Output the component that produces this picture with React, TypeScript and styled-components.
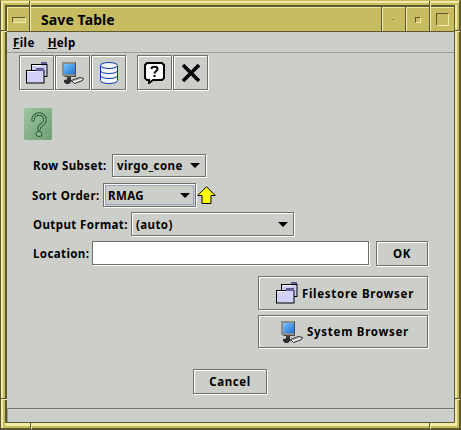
import React from "react";
import styled, { createGlobalStyle } from "styled-components";

const Global = createGlobalStyle`
  html, body { margin: 0; padding: 0; background: #ccceca; }
  body { width: 461px; height: 430px; overflow: hidden; }
`;

const light = "#f0eca8";
const gold = "#c8bc60";
const dark = "#5e5830";
const panel = "#ccceca";
const edge = "#6e706c";

const Frame = styled.div`
  box-sizing: border-box;
  position: relative;
  width: 461px;
  height: 430px;
  background: ${gold};
  border-style: solid;
  border-width: 1px 2px 2px 1px;
  border-color: ${gold} ${dark} ${dark} ${dark};
  padding: 4px 2px 2px 4px;
  box-shadow: inset 2px 2px 0 ${light};
`;
const FrameInner = styled.div`
  box-sizing: border-box;
  height: 100%;
  display: flex;
  border-right: 2px solid ${light};
  border-bottom: 3px solid ${light};
`;
const Body = styled.div`
  flex: 1;
  min-width: 0;
  display: flex;
  flex-direction: column;
  background: ${panel};
  border-style: solid;
  border-width: 2px 1px 1px 2px;
  border-color: ${dark};
`;
const TitleBar = styled.div`
  display: flex;
  height: 24px;
  flex: none;
  background: ${dark};
  gap: 1px;
  border-bottom: 1px solid ${dark};
`;
const TitleCell = styled.div<{ $w?: number; $grow?: boolean }>`
  box-sizing: border-box;
  flex: ${(p) => (p.$grow ? "1" : "none")};
  width: ${(p) => (p.$w ? `${p.$w}px` : "auto")};
  background: ${gold};
  border-left: 1px solid ${light};
  border-top: 1px solid ${light};
  display: flex;
  align-items: center;
  justify-content: center;
`;
const TitleText = styled.div`
  flex: 1;
  padding-left: 10px;
  font: 700 14px "Noto Sans", sans-serif;
  letter-spacing: 0.1px;
  color: #000;
`;
const Dash = styled.div`
  box-sizing: border-box;
  width: 14px;
  height: 6px;
  background: #d8d080;
  border: 1px solid ${dark};
  border-right-color: ${light};
  border-bottom-color: ${light};
`;
const Pip = styled.div<{ $s: number }>`
  box-sizing: border-box;
  width: ${(p) => p.$s}px;
  height: ${(p) => p.$s}px;
  border: 1px solid ${dark};
  border-right-color: ${light};
  border-bottom-color: ${light};
`;
const Notch = styled.div<{ $x: number; $y: number; $w: number; $h: number }>`
  position: absolute;
  left: ${(p) => p.$x}px;
  top: ${(p) => p.$y}px;
  width: ${(p) => p.$w}px;
  height: ${(p) => p.$h}px;
  background: ${dark};
  box-shadow: 1px 1px 0 ${light};
`;
const MenuBar = styled.div`
  display: flex;
  height: 20px;
  flex: none;
  align-items: center;
  gap: 13px;
  padding-left: 6px;
  border-bottom: 1px solid #9a9c98;
`;
const baseText = `
  font-family: "Noto Sans", sans-serif;
  font-size: 11.5px;
  font-weight: 700;
  color: #000;
`;
const MenuItem = styled.span`
  ${baseText}
  letter-spacing: 0.4px;
  u { text-decoration: underline; text-underline-offset: 1px; }
`;
const etched = `
  box-sizing: border-box;
  background: ${panel};
  border: 1px solid ${edge};
  box-shadow: 1px 1px 0 #fff, inset 1px 1px 0 #fff;
`;
const Toolbar = styled.div`
  display: flex;
  flex: none;
  gap: 1px;
  padding: 2px 0 0 12px;
  height: 36px;
`;
const ToolButton = styled.div`
  ${etched}
  width: 35px;
  height: 35px;
  display: flex;
  align-items: center;
  justify-content: center;
`;
const ToolGap = styled.div`
  width: 9px;
`;
const Content = styled.div`
  flex: 1;
  min-height: 0;
  display: flex;
  flex-direction: column;
`;
const HelpBadge = styled.div`
  width: 28px;
  height: 32px;
  margin: 17px 0 14px 17px;
  flex: none;
`;
const Row = styled.div<{ $left: number; $h: number; $mb: number }>`
  display: flex;
  align-items: center;
  height: ${(p) => p.$h}px;
  margin: 0 0 ${(p) => p.$mb}px ${(p) => p.$left}px;
  flex: none;
`;
const Label = styled.span<{ $w: number }>`
  ${baseText}
  letter-spacing: 0.4px;
  white-space: nowrap;
  width: ${(p) => p.$w}px;
  flex: none;
`;
const Combo = styled.div<{ $w: number; $focus?: boolean }>`
  ${etched}
  ${baseText}
  width: ${(p) => p.$w}px;
  height: 100%;
  display: flex;
  align-items: center;
  justify-content: space-between;
  padding: 0 5px 0 4px;
  letter-spacing: 0.4px;
  ${(p) => (p.$focus ? "outline: 1px solid #9aa0c8; outline-offset: -3px;" : "")}
`;
const Caret = styled.span`
  width: 0;
  height: 0;
  border-left: 5px solid transparent;
  border-right: 5px solid transparent;
  border-top: 5px solid #000;
  flex: none;
`;
const Field = styled.div`
  box-sizing: border-box;
  width: 277px;
  height: 24px;
  background: #fff;
  border: 1px solid ${edge};
  box-shadow: 1px 1px 0 #fff;
  flex: none;
`;
const Button = styled.div<{ $w: number; $h: number }>`
  ${etched}
  ${baseText}
  letter-spacing: 0.6px;
  width: ${(p) => p.$w}px;
  height: ${(p) => p.$h}px;
  display: flex;
  align-items: center;
  justify-content: center;
  flex: none;
`;
const OkButton = styled(Button)`
  margin-left: 7px;
`;
const IconButton = styled(Button)`
  gap: 4px;
  padding-left: 4px;
  letter-spacing: 0.72px;
`;
const Stack = styled.div`
  display: flex;
  flex-direction: column;
  align-items: flex-end;
  gap: 5px;
  padding: 11px 26px 0 0;
  flex: none;
`;
const CancelRow = styled.div`
  display: flex;
  padding: 21px 0 0 186px;
  flex: none;
`;
const Status = styled.div`
  box-sizing: border-box;
  margin-top: auto;
  height: 14px;
  flex: none;
  border-top: 1px solid ${edge};
  border-left: 1px solid #9a9c98;
  box-shadow: inset 0 1px 0 #dcdeda;
`;

const FolderIcon = () => (
  <svg width="22" height="22" viewBox="0 0 22 22" style={{ flex: "none" }}>
    <path d="M15 0h6v3h-6z" fill="#5a5a90" />
    <rect x="5.5" y="2.5" width="15.5" height="12" fill="#ccccf4" stroke="#000" />
    <path d="M6 3h9v1H6z" fill="#fff" />
    <path d="M10 6h8v3h-8z" fill="#5a5a90" />
    <rect x="0.5" y="8.5" width="17.5" height="12.5" fill="#d0d0f8" stroke="#000" />
    <path d="M1 9h9v1H1z" fill="#fff" />
    <path d="M10 7h8v2h-8z" fill="#62629a" />
  </svg>
);

const SystemIcon = () => (
  <svg width="22" height="22" viewBox="0 0 22 22" style={{ flex: "none" }}>
    <defs>
      <linearGradient id="scr" x1="0" y1="0" x2="1" y2="1">
        <stop offset="0" stopColor="#7cc4f8" />
        <stop offset="1" stopColor="#1c70d8" />
      </linearGradient>
    </defs>
    <path d="M0 0h14v15H2L0 13z" fill="#8c8e8c" />
    <path d="M14 0v15H2l1-1h10V1z" fill="#4a4c4a" />
    <path d="M2 2h11v10H2z" fill="url(#scr)" />
    <path d="M5 15h4v3H5z" fill="#3c3c3c" />
    <path d="M2 18l6-1 2 2-3 3H4l-2-2z" fill="#2c2c2c" />
    <path d="M9.5 18.5l8-3 4 1-1 2-8 3z" fill="#f4f4f4" stroke="#222" />
    <path d="M12 18.5l6-2" stroke="#888" />
  </svg>
);

const DbIcon = () => (
  <svg width="18" height="22" viewBox="0 0 18 22" fill="#f4f6fa" stroke="#0a3aa0" strokeWidth="1">
    <path d="M.5 3.5v15c0 4 17 4 17 0v-15" />
    <ellipse cx="9" cy="3.5" rx="8.5" ry="3" />
    <path d="M.5 8.5c0 4 17 4 17 0M.5 13.5c0 4 17 4 17 0" fill="none" />
  </svg>
);

const HelpBubble = () => (
  <svg width="21" height="22" viewBox="0 0 21 22">
    <path d="M3 1h15l2 2v13l-2 2H9l-4 3v-3H3l-2-2V3z" fill="#fff" stroke="#000" strokeWidth="2" />
    <path d="M7.5 7c0-3 6-3 6 0 0 2.2-3 2.2-3 4.5" fill="none" stroke="#000" strokeWidth="2" />
    <path d="M9.5 13h2v2h-2z" fill="#000" />
  </svg>
);

const CloseIcon = () => (
  <svg width="20" height="20" viewBox="0 0 20 20">
    <path d="M2 2l16 16M18 2L2 18" stroke="#000" strokeWidth="3.6" />
  </svg>
);

const GreenHelp = () => (
  <svg width="28" height="32" viewBox="0 0 28 32" style={{ display: "block" }}>
    <defs>
      <pattern id="dots" width="2" height="2" patternUnits="userSpaceOnUse">
        <rect width="2" height="2" fill="#8fbc92" />
        <rect width="1" height="1" fill="#78a880" />
      </pattern>
      <linearGradient id="fade" x1="0" y1="0" x2="1" y2="1">
        <stop offset="0" stopColor="#b0d4b0" stopOpacity="0.5" />
        <stop offset="1" stopColor="#508058" stopOpacity="0.45" />
      </linearGradient>
    </defs>
    <rect width="28" height="32" rx="2" fill="url(#dots)" />
    <rect width="28" height="32" rx="2" fill="url(#fade)" />
    <g fill="none" strokeLinecap="round">
      <path d="M9 12c0-8 12-8 12 0 0 5-6 4-6 9" stroke="#1e5a2e" strokeWidth="3.4" />
      <path d="M9 12c0-8 12-8 12 0 0 5-6 4-6 9" stroke="#8fbc92" strokeWidth="1.6" />
    </g>
    <ellipse cx="15" cy="26" rx="3" ry="2.5" fill="#8fbc92" stroke="#1e5a2e" />
  </svg>
);

const UpArrow = () => (
  <svg width="19" height="18" viewBox="0 0 19 18" style={{ flex: "none", marginLeft: 1 }}>
    <path d="M9.5 .7L18.3 9.5H14V17.5H5V9.5H.7z" fill="#ffff00" stroke="#000" strokeWidth="1" />
  </svg>
);

export default function App() {
  return (
    <>
      <Global />
      <Frame>
        <FrameInner>
          <Body>
            <TitleBar>
              <TitleCell $w={22}>
                <Dash />
              </TitleCell>
              <TitleCell $grow>
                <TitleText>Save Table</TitleText>
              </TitleCell>
              <TitleCell $w={23}>
                <Pip $s={2} />
              </TitleCell>
              <TitleCell $w={23}>
                <Pip $s={6} />
              </TitleCell>
              <TitleCell $w={24}>
                <Pip $s={13} />
              </TitleCell>
            </TitleBar>
            <MenuBar>
              <MenuItem>
                <u>F</u>ile
              </MenuItem>
              <MenuItem>
                <u>H</u>elp
              </MenuItem>
            </MenuBar>
            <Content>
              <Toolbar>
                <ToolButton>
                  <FolderIcon />
                </ToolButton>
                <ToolButton>
                  <SystemIcon />
                </ToolButton>
                <ToolButton>
                  <DbIcon />
                </ToolButton>
                <ToolGap />
                <ToolButton>
                  <HelpBubble />
                </ToolButton>
                <ToolButton>
                  <CloseIcon />
                </ToolButton>
              </Toolbar>
              <HelpBadge>
                <GreenHelp />
              </HelpBadge>
              <Row $left={26} $h={23} $mb={6}>
                <Label $w={79}>Row Subset:</Label>
                <Combo $w={94}>
                  virgo_cone
                  <Caret />
                </Combo>
              </Row>
              <Row $left={25} $h={24} $mb={5}>
                <Label $w={71}>Sort Order:</Label>
                <Combo $w={93} $focus>
                  RMAG
                  <Caret />
                </Combo>
                <UpArrow />
              </Row>
              <Row $left={26} $h={24} $mb={5}>
                <Label $w={98}>Output Format:</Label>
                <Combo $w={163}>
                  (auto)
                  <Caret />
                </Combo>
              </Row>
              <Row $left={26} $h={24} $mb={0}>
                <Label $w={59}>Location:</Label>
                <Field />
                <OkButton $w={52} $h={25}>
                  OK
                </OkButton>
              </Row>
              <Stack>
                <IconButton $w={170} $h={34}>
                  <FolderIcon />
                  Filestore Browser
                </IconButton>
                <IconButton $w={170} $h={33}>
                  <SystemIcon />
                  System Browser
                </IconButton>
              </Stack>
              <CancelRow>
                <Button $w={74} $h={25}>
                  Cancel
                </Button>
              </CancelRow>
              <Status />
            </Content>
          </Body>
        </FrameInner>
        <Notch $x={28} $y={0} $w={1} $h={5} />
        <Notch $x={0} $y={29} $w={5} $h={1} />
        <Notch $x={428} $y={0} $w={1} $h={5} />
        <Notch $x={454} $y={29} $w={4} $h={1} />
        <Notch $x={29} $y={422} $w={1} $h={5} />
        <Notch $x={0} $y={397} $w={5} $h={1} />
        <Notch $x={428} $y={422} $w={1} $h={5} />
        <Notch $x={454} $y={397} $w={4} $h={1} />
      </Frame>
    </>
  );
}
